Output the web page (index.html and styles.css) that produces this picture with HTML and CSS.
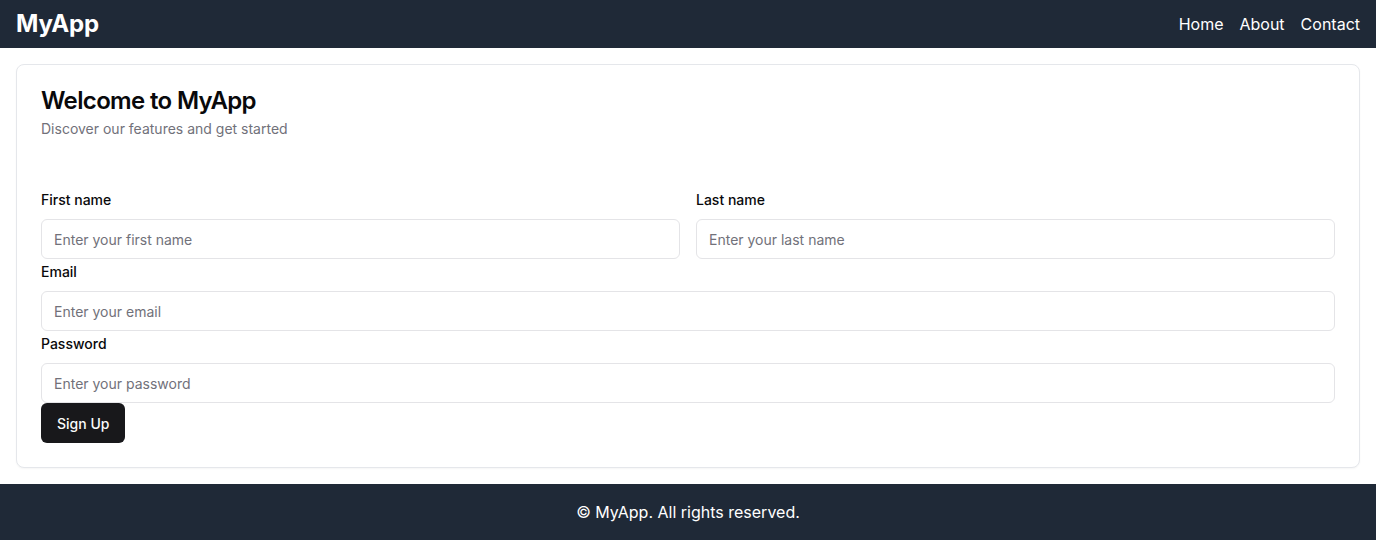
FILE: index.html
```html
<!DOCTYPE html>
<html lang="en">
<head>
<meta charset="utf-8">
<title>MyApp</title>
<link rel="stylesheet" href="styles.css">
</head>
<body>
<header class="topbar">
  <div class="brand">MyApp</div>
  <nav class="nav">
    <a href="#">Home</a>
    <a href="#">About</a>
    <a href="#">Contact</a>
  </nav>
</header>
<main class="main">
  <section class="card">
    <div class="card-header">
      <h1 class="card-title">Welcome to MyApp</h1>
      <p class="card-desc">Discover our features and get started</p>
    </div>
    <div class="card-content">
      <form class="form">
        <div class="row">
          <div class="field">
            <label for="fn">First name</label>
            <input id="fn" type="text" placeholder="Enter your first name">
          </div>
          <div class="field">
            <label for="ln">Last name</label>
            <input id="ln" type="text" placeholder="Enter your last name">
          </div>
        </div>
        <div class="field">
          <label for="em">Email</label>
          <input id="em" type="email" placeholder="Enter your email">
        </div>
        <div class="field">
          <label for="pw">Password</label>
          <input id="pw" type="password" placeholder="Enter your password">
        </div>
        <div><button type="button" class="btn">Sign Up</button></div>
      </form>
    </div>
  </section>
</main>
<footer class="footer">© MyApp. All rights reserved.</footer>
</body>
</html>
```
FILE: styles.css
```css
* { box-sizing: border-box; }
html, body { margin: 0; padding: 0; }
body {
  font-family: Inter, "Noto Sans", "Liberation Sans", sans-serif;
  color: #09090b;
  background: #ffffff;
}
.topbar {
  height: 48px;
  background: #1f2937;
  color: #ffffff;
  display: flex;
  align-items: center;
  justify-content: space-between;
  padding: 0 16px;
}
.brand {
  font-size: 24px;
  font-weight: 700;
  line-height: 32px;
  letter-spacing: -0.1px;
}
.nav { display: flex; gap: 16px; }
.nav a {
  color: #ffffff;
  text-decoration: none;
  font-size: 16px;
  line-height: 24px;
}
.main { padding: 16px; }
.card {
  border: 1px solid #e5e7eb;
  border-radius: 8px;
  background: #fff;
  box-shadow: 0 1px 2px rgba(0,0,0,0.04);
}
.card-header {
  padding: 24px;
  display: flex;
  flex-direction: column;
  gap: 6px;
}
.card-title {
  margin: 0;
  font-size: 24px;
  line-height: 24px;
  font-weight: 600;
  letter-spacing: -0.65px;
}
.card-desc {
  margin: 0;
  font-size: 14px;
  line-height: 20px;
  color: #71717a;
}
.card-content { padding: 24px; }
.form { display: flex; flex-direction: column; }
.row {
  display: grid;
  grid-template-columns: 1fr 1fr;
  gap: 16px;
}
.field {
  display: flex;
  flex-direction: column;
  padding-top: 3px;
}
.field label {
  font-size: 14px;
  line-height: 20px;
  font-weight: 500;
  color: #09090b;
  margin-bottom: 9px;
}
.field input {
  height: 40px;
  border: 1px solid #e4e4e7;
  border-radius: 6px;
  padding: 0 12px;
  font-family: inherit;
  font-size: 14px;
  color: #09090b;
  background: #fff;
  outline: none;
}
.field input::placeholder { color: #71717a; }
.btn {
  height: 40px;
  padding: 0 16px;
  border: none;
  border-radius: 6px;
  background: #18181b;
  color: #fafafa;
  font-family: inherit;
  font-size: 14px;
  font-weight: 500;
  cursor: pointer;
}
.footer {
  background: #1f2937;
  color: #ffffff;
  text-align: center;
  padding: 16px;
  font-size: 16px;
  line-height: 24px;
}
```
